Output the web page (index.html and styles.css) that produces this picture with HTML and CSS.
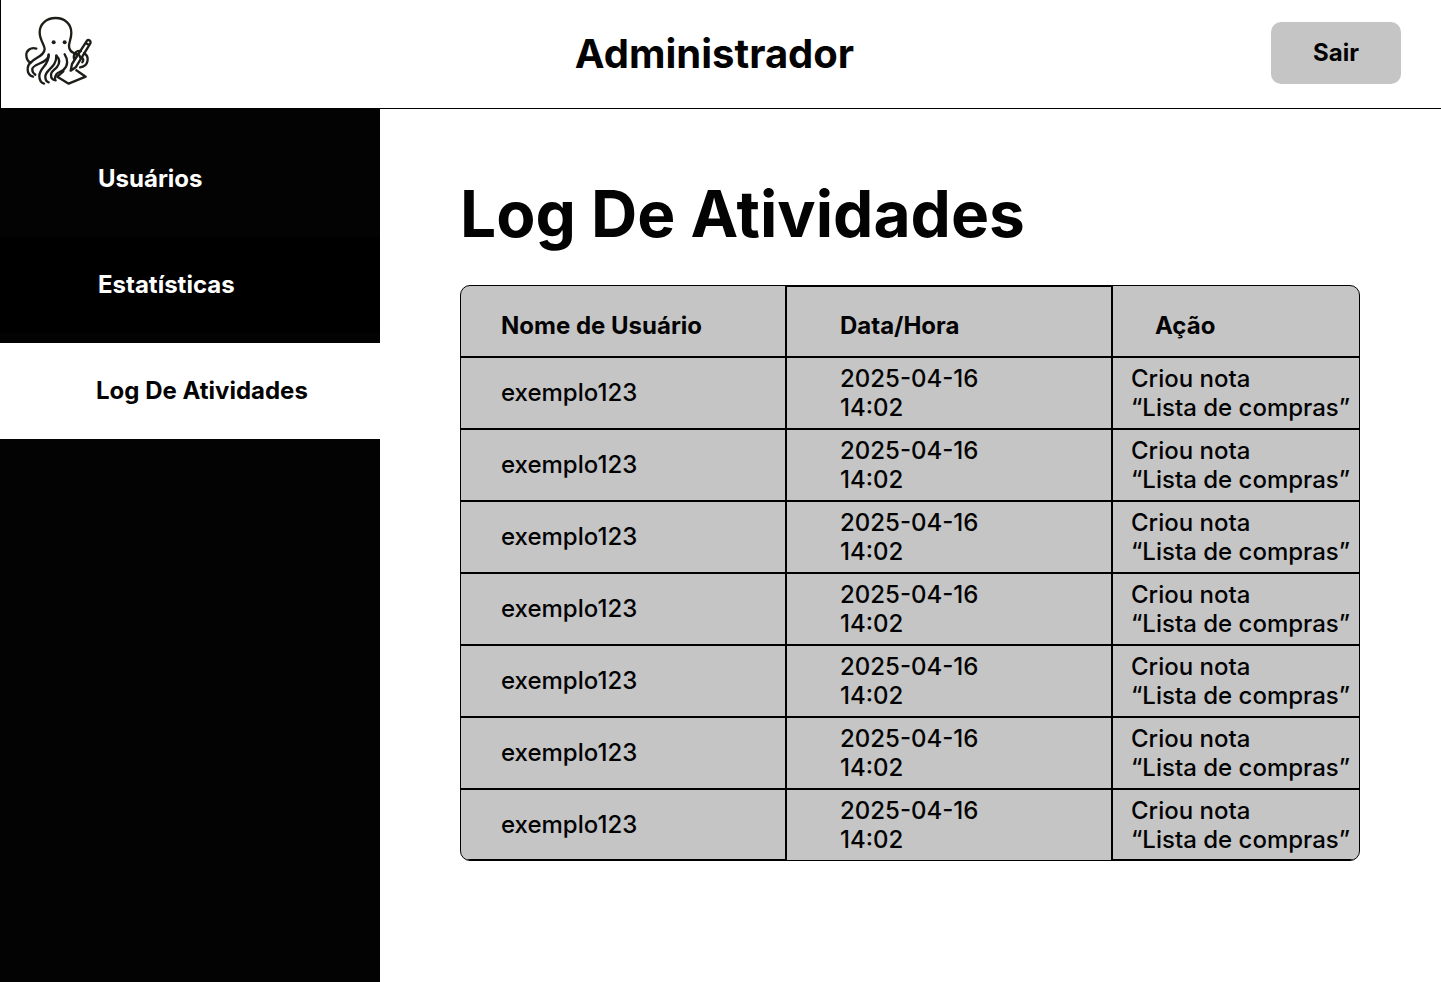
FILE: index.html
```html
<!DOCTYPE html>
<html lang="pt-BR">
<head>
<meta charset="utf-8">
<meta name="viewport" content="width=device-width, initial-scale=1">
<title>Administrador – Log De Atividades</title>
<link rel="stylesheet" href="styles.css">
</head>
<body>
<header class="topbar">
  <svg class="logo" viewBox="72 48 204 210" role="img" aria-label="Polvo escrevendo">
    <g class="logo-lines">
      <path d="M94 186C108 172 134 166 134 147C134 134 119 121 119 97C119 72 139 54 167 54C194 54 214 72 214 98C214 116 207 126 207 138C207 150 216 158 227 161"/>
      <path d="M109 146C92 140 79 152 79 165C79 176 84 184 91 188"/>
      <path d="M94 186C78 198 79 224 99 230"/>
      <path d="M146 164C146 190 98 191 97 207C96 214 100 220 106 224"/>
      <path d="M146 164C147 198 118 202 118 228C118 240 123 248 132 251"/>
      <path d="M169 167C170 204 136 208 136 230C136 240 140 245 146 247"/>
      <path d="M169 167C182 180 180 190 171 201C162 212 153 212 153 225C153 235 158 240 167 241"/>
      <path d="M194 163C204 178 205 198 190 210C180 218 165 216 165 237"/>
      <path d="M222 176C219 160 230 150 243 153M252 160C269 168 267 199 240 202M226 163C234 160 240 165 240 172"/>
      <path d="M243 174C250 173 252 181 247 187"/>
      <path d="M261 122L216 192L212 212L227 202L271 130C274 123 266 117 261 122ZM257 129L267 135"/>
      <path d="M190 214L172 230L206 251L257 230L229 211"/>
    </g>
    <circle cx="161" cy="127" r="6"/>
    <circle cx="194" cy="127" r="6"/>
  </svg>
  <p class="topbar-title">Administrador</p>
  <button class="logout" type="button">Sair</button>
</header>
<div class="layout">
  <nav class="sidebar" aria-label="Principal">
    <a class="nav-item" href="#usuarios">Usuários</a>
    <a class="nav-item nav-item-dark" href="#estatisticas">Estatísticas</a>
    <a class="nav-item nav-item-active" href="#log" aria-current="page">Log De Atividades</a>
  </nav>
  <main class="content">
    <h1 class="page-title">Log De Atividades</h1>
    <div class="log-frame">
      <table class="log">
        <colgroup><col class="col-user"><col class="col-date"><col></colgroup>
        <thead>
          <tr><th scope="col">Nome de Usuário</th><th scope="col">Data/Hora</th><th scope="col">Ação</th></tr>
        </thead>
        <tbody>
          <tr><td>exemplo123</td><td>2025-04-16<br>14:02</td><td>Criou nota<br>“Lista de compras”</td></tr>
          <tr><td>exemplo123</td><td>2025-04-16<br>14:02</td><td>Criou nota<br>“Lista de compras”</td></tr>
          <tr><td>exemplo123</td><td>2025-04-16<br>14:02</td><td>Criou nota<br>“Lista de compras”</td></tr>
          <tr><td>exemplo123</td><td>2025-04-16<br>14:02</td><td>Criou nota<br>“Lista de compras”</td></tr>
          <tr><td>exemplo123</td><td>2025-04-16<br>14:02</td><td>Criou nota<br>“Lista de compras”</td></tr>
          <tr><td>exemplo123</td><td>2025-04-16<br>14:02</td><td>Criou nota<br>“Lista de compras”</td></tr>
          <tr><td>exemplo123</td><td>2025-04-16<br>14:02</td><td>Criou nota<br>“Lista de compras”</td></tr>
        </tbody>
      </table>
    </div>
  </main>
</div>
</body>
</html>
```
FILE: styles.css
```css
* {
  box-sizing: border-box;
}

body {
  margin: 0;
  min-height: 100vh;
  display: flex;
  flex-direction: column;
  background: #fff;
  color: #030303;
  font-family: Inter, "Liberation Sans", sans-serif;
  font-size: 24px;
  line-height: 29px;
}

.topbar {
  display: grid;
  grid-template-columns: 1fr auto 1fr;
  align-items: center;
  min-height: 109px;
  padding: 16px 40px 18px 23px;
  border-left: 1px solid #000;
  border-bottom: 1px solid #000;
}

.logo {
  align-self: start;
  width: 68px;
  height: 70px;
  fill: #1e1e19;
}

.logo-lines {
  fill: none;
  stroke: #1e1e19;
  stroke-width: 7;
  stroke-linecap: round;
  stroke-linejoin: round;
}

.topbar-title {
  margin: 0;
  padding: 2px 0 0 4px;
  font-size: 40px;
  line-height: 48px;
  font-weight: 700;
}

.logout {
  justify-self: end;
  width: 130px;
  padding: 16px 16px 17px;
  border: 0;
  border-radius: 10px;
  background: #c5c5c5;
  color: inherit;
  font: inherit;
  font-weight: 700;
}

.layout {
  flex: 1;
  display: flex;
}

.sidebar {
  flex: 0 0 380px;
  display: flex;
  flex-direction: column;
  gap: 10px;
  padding-top: 22px;
  background: #030303;
}

.nav-item {
  padding: 33px 24px 34px 98px;
  color: #fff;
  font-weight: 700;
  text-decoration: none;
}

.nav-item-dark {
  background: #000;
}

.nav-item-active {
  padding-left: 96px;
  background: #fff;
  color: #030303;
}

.content {
  flex: 1;
  padding: 66px 80px;
}

.page-title {
  margin: 0 0 32px;
  font-size: 64px;
  line-height: 78px;
  font-weight: 700;
}

.log-frame {
  max-width: 900px;
  overflow: hidden;
  border: 1px solid #000;
  border-radius: 10px;
  background: #c5c5c5;
}

.log {
  width: 100%;
  border-collapse: separate;
  border-spacing: 0;
  table-layout: fixed;
}

.col-user {
  width: 324px;
}

.col-date {
  width: 326px;
}

.log th,
.log td {
  padding: 6px 0 6px 40px;
  border-bottom: 2px solid #000;
  text-align: left;
  white-space: nowrap;
}

.log td {
  font-weight: 500;
}

.log th {
  padding-top: 25px;
  padding-bottom: 16px;
  font-weight: 700;
}

.log td:first-child {
  padding-bottom: 8px;
}

.log th + th,
.log td + td {
  border-left: 2px solid #000;
}

.log th:nth-child(2),
.log td:nth-child(2) {
  padding-left: 53px;
}

.log th:nth-child(2) {
  padding-top: 24px;
  border-top: 1px solid #000;
}

.log th:nth-child(3) {
  padding-left: 42px;
}

.log td:nth-child(3) {
  padding-left: 18px;
}

.log tbody tr:last-child td {
  padding-bottom: 5px;
  border-bottom-width: 1px;
}

.log tbody tr:last-child td:first-child {
  padding-bottom: 7px;
}

.log tbody tr:last-child td:nth-child(2) {
  padding-bottom: 6px;
  border-bottom: 0;
}
```
